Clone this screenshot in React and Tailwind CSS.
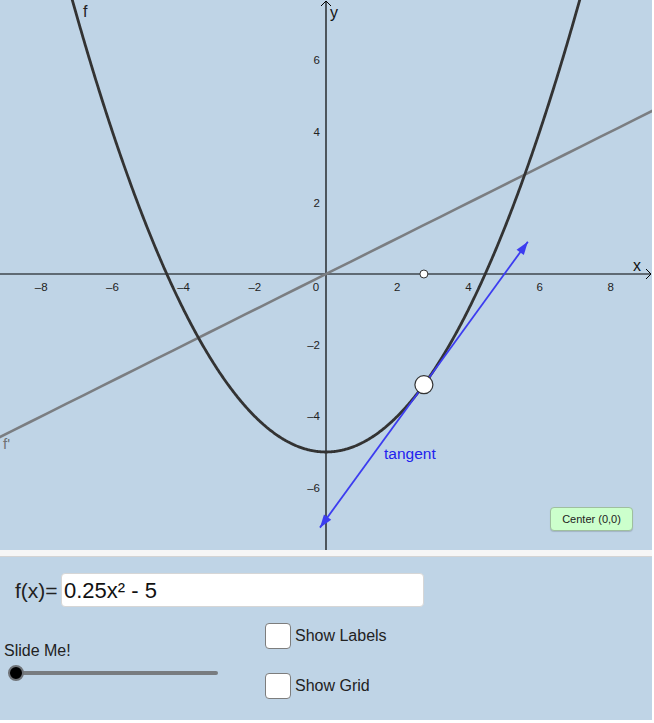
import React from "react";

const OX = 326;
const OY = 274;
const S = 35.6;
const W = 652;
const H = 550;

const px = (x) => OX + x * S;
const py = (y) => OY - y * S;

function curvePath(fn, x0, x1, step = 0.02) {
  let d = "";
  for (let x = x0; x <= x1 + 1e-9; x += step) {
    const X = px(x);
    const Y = py(fn(x));
    d += (d ? " L" : "M") + X.toFixed(2) + " " + Y.toFixed(2);
  }
  return d;
}

function arrowHead(x1, y1, x2, y2, len = 13, half = 4.5) {
  const dx = x2 - x1;
  const dy = y2 - y1;
  const l = Math.hypot(dx, dy);
  const ux = dx / l;
  const uy = dy / l;
  const bx = x2 - ux * len;
  const by = y2 - uy * len;
  const nx = -uy;
  const ny = ux;
  return `${x2},${y2} ${bx + nx * half},${by + ny * half} ${bx - nx * half},${by - ny * half}`;
}

function Graph() {
  const f = (x) => 0.25 * x * x - 5;
  const fp = (x) => 0.5 * x;
  const a = 2.75;
  const m = 0.5 * a;
  const fa = f(a);
  const d = 2.92;
  const tx1 = px(a - d);
  const ty1 = py(fa - m * d);
  const tx2 = px(a + d);
  const ty2 = py(fa + m * d);
  const cx = px(a);
  const cy = py(fa);

  const xTicks = [-8, -6, -4, -2, 2, 4, 6, 8];
  const yTicks = [6, 4, 2, -2, -4, -6];
  const minus = "\u2013";

  return (
    <svg width={W} height={H} className="block" style={{ fontFamily: "'Liberation Sans', Arial, sans-serif" }}>
      {/* axes */}
      <line x1="0" y1={OY} x2={W - 1} y2={OY} stroke="#000" strokeWidth="1.2" />
      <polyline points={`${W - 6},${OY - 5} ${W - 1},${OY} ${W - 6},${OY + 5}`} fill="none" stroke="#000" strokeWidth="1" />
      <line x1={OX} y1="1" x2={OX} y2={H} stroke="#000" strokeWidth="1.2" />
      <polyline points={`${OX - 5},${6} ${OX},${1} ${OX + 5},${6}`} fill="none" stroke="#000" strokeWidth="1" />

      {xTicks.map((t) => (
        <text key={t} x={px(t)} y={OY + 17} fontSize="11.5" textAnchor="middle" fill="#222">
          {t < 0 ? minus + Math.abs(t) : t}
        </text>
      ))}
      <text x={OX - 10} y={OY + 17} fontSize="11.5" textAnchor="middle" fill="#222">0</text>
      {yTicks.map((t) => (
        <text key={t} x={OX - 6} y={py(t) + 4} fontSize="11.5" textAnchor="end" fill="#222">
          {t < 0 ? minus + Math.abs(t) : t}
        </text>
      ))}
      <text x="633" y="271" fontSize="16" fill="#111">x</text>
      <text x="330" y="18" fontSize="16" fill="#111">y</text>

      {/* derivative line */}
      <path d={curvePath(fp, -9.3, 9.3, 0.5)} fill="none" stroke="#7b7e82" strokeWidth="2.6" />
      <text x="3" y="449" fontSize="15" fill="#6f7275">f'</text>

      {/* parabola */}
      <path d={curvePath(f, -7.3, 7.3, 0.02)} fill="none" stroke="#333333" strokeWidth="2.8" />
      <text x="83" y="17" fontSize="16" fill="#222">f</text>

      {/* tangent vectors */}
      <line x1={cx} y1={cy} x2={tx2} y2={ty2} stroke="#3c3cf0" strokeWidth="1.8" />
      <line x1={cx} y1={cy} x2={tx1} y2={ty1} stroke="#3c3cf0" strokeWidth="1.8" />
      <polygon points={arrowHead(cx, cy, tx2, ty2)} fill="#3c3cf0" />
      <polygon points={arrowHead(cx, cy, tx1, ty1)} fill="#3c3cf0" />
      <text x="384" y="459" fontSize="15.5" fill="#2222ee">tangent</text>

      {/* points */}
      <circle cx={px(a)} cy={OY} r="4" fill="#fff" stroke="#333" strokeWidth="1" />
      <circle cx={cx} cy={cy} r="9" fill="#fff" stroke="#333" strokeWidth="1.2" />
    </svg>
  );
}

function Checkbox({ label }) {
  return (
    <div className="flex items-center gap-[4px]">
      <div className="w-[26px] h-[26px] bg-white border-[1.5px] border-[#7d7d7d] rounded-[4px]" />
      <span className="text-[16px] text-[#222]">{label}</span>
    </div>
  );
}

export default function App() {
  return (
    <div className="w-[652px] flex flex-col" style={{ fontFamily: "'Liberation Sans', Arial, sans-serif" }}>
      <div className="relative w-[652px] h-[550px] bg-[#bfd4e6] overflow-hidden">
        <Graph />
        <button className="absolute left-[550px] top-[507px] w-[83px] h-[24px] bg-[#ccffcc] border border-[#9fbf9f] rounded-[4px] text-[11px] text-[#222] flex items-center justify-center shadow-[0_1px_1px_rgba(0,0,0,0.15)]">
          Center (0,0)
        </button>
      </div>
      <div className="h-[7px] bg-[#f6f6f6] border-b border-[#d4d4d4]" />
      <div className="h-[163px] bg-[#bfd4e6] flex flex-col pt-[16px]">
        <div className="flex items-center pl-[15px]">
          <span className="text-[21px] text-[#222] w-[46px] leading-none">f(x)=</span>
          <div className="w-[363px] h-[34px] bg-white border border-[#d6d6d6] rounded-[4px] flex items-center pl-[2px] text-[22px] text-[#111]">
            0.25x² - 5
          </div>
        </div>
        <div className="flex mt-[16px]">
          <div className="w-[265px] pl-[4px] pt-[19px] flex flex-col">
            <span className="text-[16px] text-[#222] leading-[18px]">Slide Me!</span>
            <div className="relative mt-[5px] ml-[4px] w-[210px] h-[16px] flex items-center">
              <div className="ml-[8px] w-[202px] h-[4px] rounded-full bg-[#787c80]" />
              <div className="absolute left-0 top-0 w-[16px] h-[16px] rounded-full bg-black border-[2.5px] border-[#6f7378]" />
            </div>
          </div>
          <div className="flex flex-col gap-[24px]">
            <Checkbox label="Show Labels" />
            <Checkbox label="Show Grid" />
          </div>
        </div>
      </div>
    </div>
  );
}
